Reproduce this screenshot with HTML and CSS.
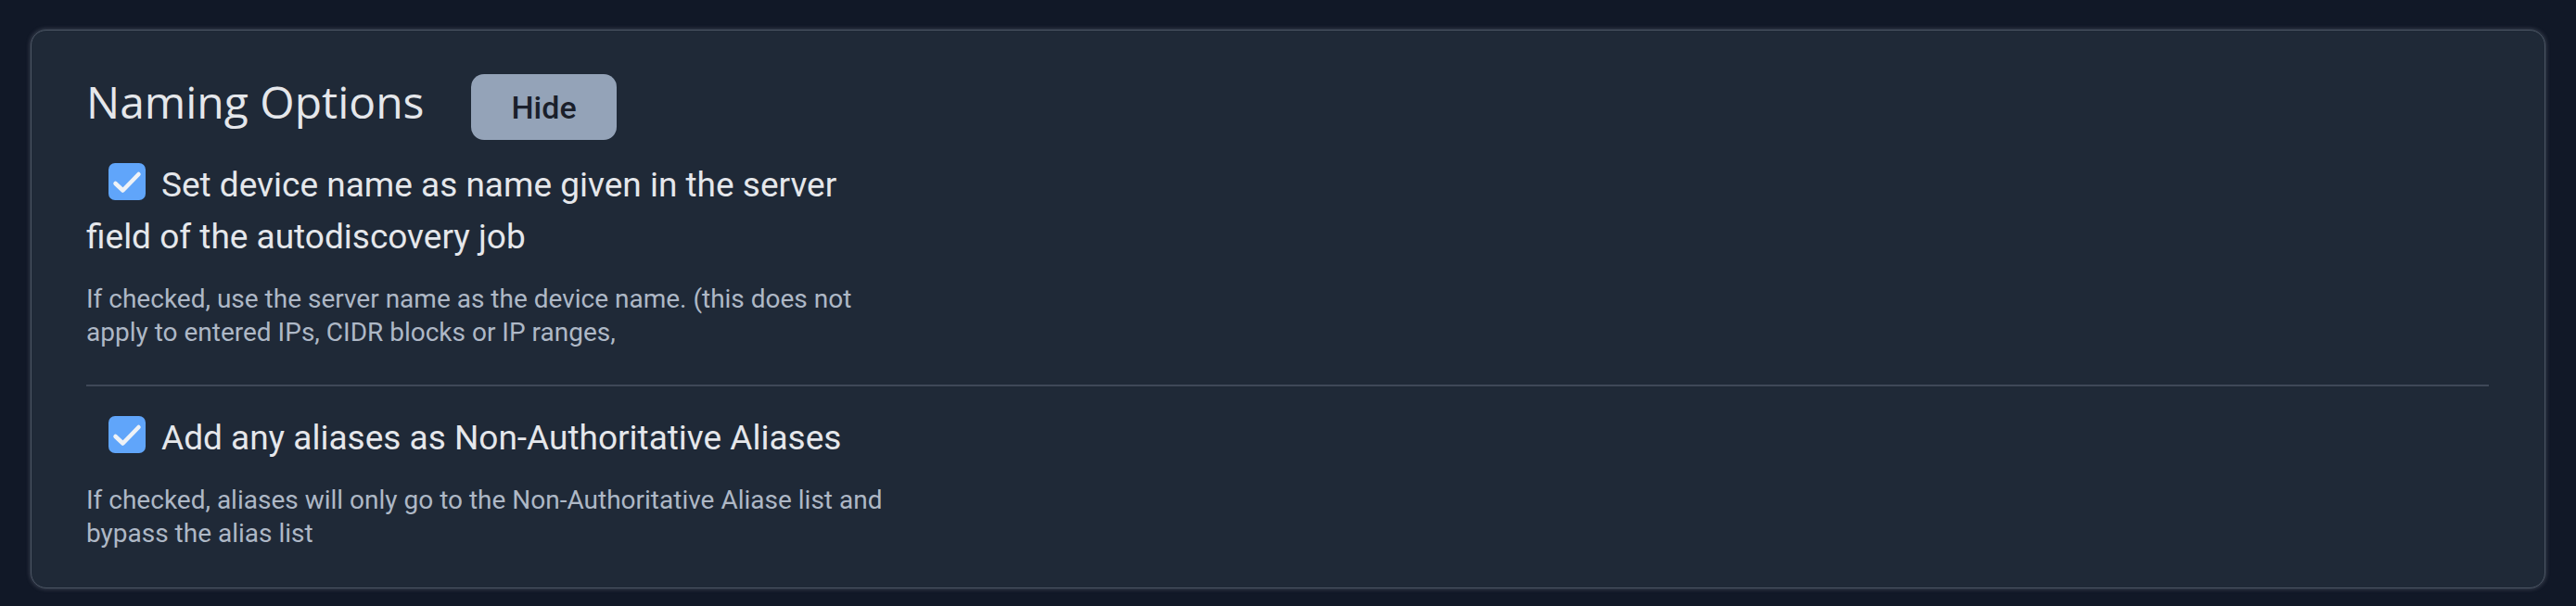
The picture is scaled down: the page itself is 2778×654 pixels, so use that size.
FILE: index.html
```html
<!DOCTYPE html>
<html lang="en">
<head>
    <meta charset="UTF-8">
    <meta name="viewport" content="width=device-width, initial-scale=1.0">
    <title>Naming Options</title>
    <link rel="stylesheet" href="styles.css">
</head>
<body>
    <div class="page">
        <section class="card">
            <div class="card-header">
                <h2>Naming Options</h2>
                <button class="btn-hide" type="button">Hide</button>
            </div>

            <div class="option">
                <label class="option-label"><span class="check"><svg viewBox="0 0 40 40" width="40" height="40"><polyline points="7.5,22 15.5,29.5 32.5,12"/></svg></span>Set device name as name given in the server field of the autodiscovery job</label>
                <p class="option-desc">If checked, use the server name as the device name. (this does not apply to entered IPs, CIDR blocks or IP ranges,</p>
            </div>

            <div class="option">
                <label class="option-label"><span class="check"><svg viewBox="0 0 40 40" width="40" height="40"><polyline points="7.5,22 15.5,29.5 32.5,12"/></svg></span>Add any aliases as Non-Authoritative Aliases</label>
                <p class="option-desc">If checked, aliases will only go to the Non-Authoritative Aliase list and bypass the alias list</p>
            </div>
        </section>
    </div>
</body>
</html>
```
FILE: styles.css
```css
body {
    margin: 0;
    padding: 0;
    background-color: #111827;
    font-family: Roboto, "Liberation Sans", sans-serif;
    color: #e5e7eb;
}
.page {
    padding: 32px 33px;
}
.card {
    background: #1f2937;
    border: 1px solid #4b5563;
    border-radius: 17px;
    box-shadow: 0 0 4px 1px rgba(107, 114, 128, 0.45);
    padding: 47px 60px 0 59px;
}
.card-header {
    display: flex;
    align-items: baseline;
    gap: 51px;
}
.card-header h2 {
    margin: 0;
    font-family: "Open Sans", sans-serif;
    font-size: 48px;
    font-weight: 500;
    line-height: 1.2;
    color: #e5e7eb;
}
.btn-hide {
    font-family: Roboto, sans-serif;
    font-size: 34px;
    font-weight: 500;
    line-height: 40px;
    padding: 16px 43px 15px;
    background: #94a3b8;
    color: #1a1f2b;
    border: none;
    border-radius: 14px;
}
.option {
    padding: 28px 0 38px;
    border-bottom: 2px solid #3f4858;
}
.card-header + .option {
    padding-top: 21px;
}
.option:last-child {
    border-bottom: none;
    padding-bottom: 40px;
}
.option-label {
    display: block;
    max-width: 875px;
    font-size: 37px;
    line-height: 56px;
    color: #e5e7eb;
}
.check {
    display: inline-block;
    width: 40px;
    height: 40px;
    margin: 0 17px 0 24px;
    vertical-align: -4px;
    background: #60a5fa;
    border-radius: 7px;
}
.check svg {
    display: block;
    fill: none;
    stroke: #eef2f7;
    stroke-width: 4.5;
    stroke-linecap: round;
    stroke-linejoin: round;
}
.option-desc {
    max-width: 875px;
    margin: 21px 0 0;
    font-size: 28px;
    line-height: 36px;
    color: #aeb8c6;
}
```
